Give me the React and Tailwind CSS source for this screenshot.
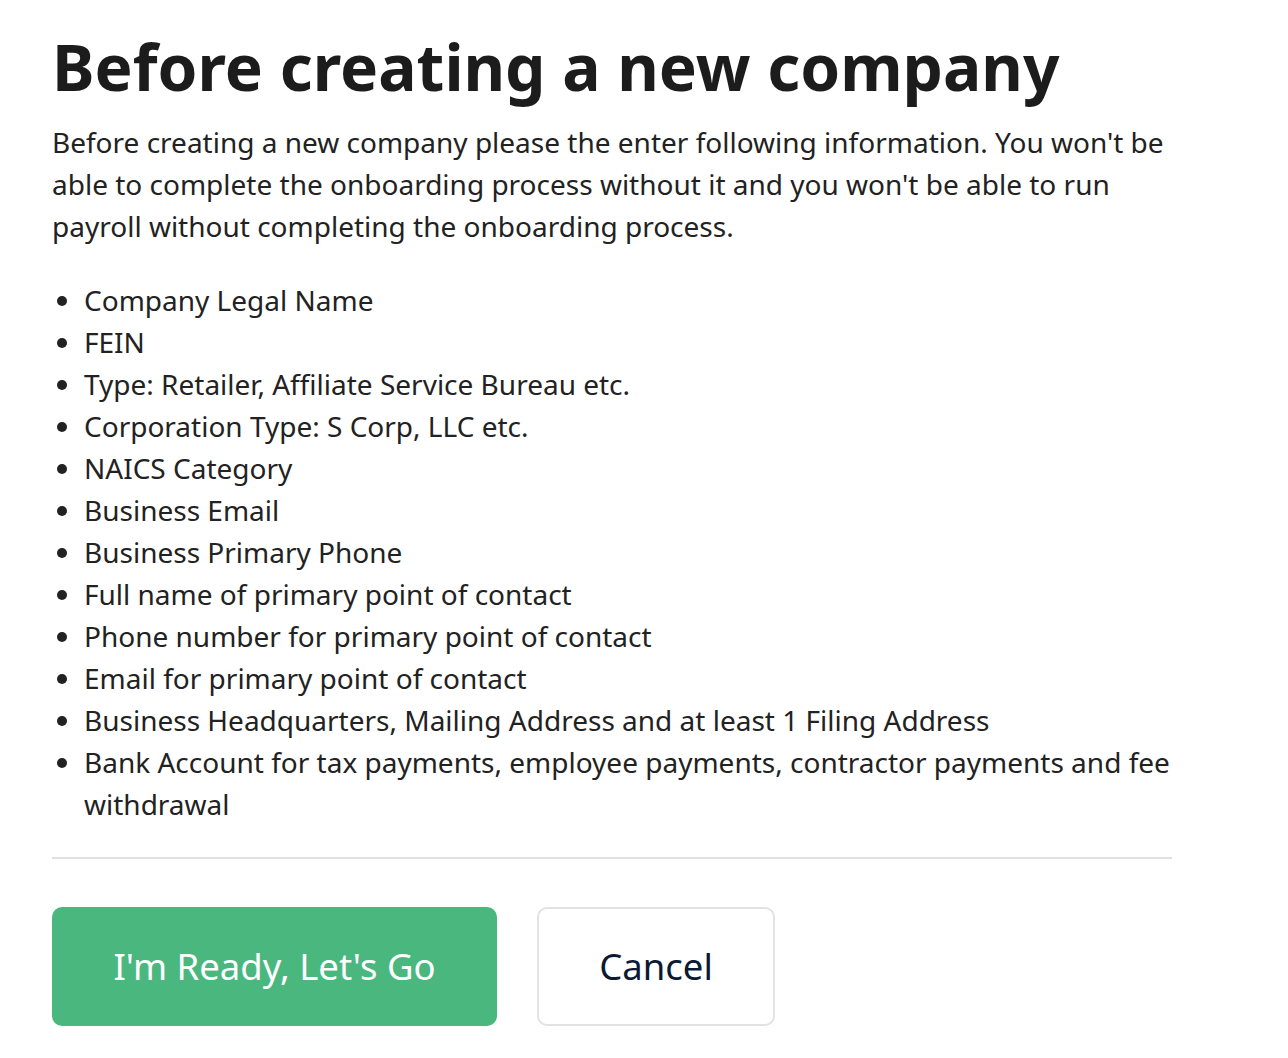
import React from "react";

const items = [
  "Company Legal Name",
  "FEIN",
  "Type: Retailer, Affiliate Service Bureau etc.",
  "Corporation Type: S Corp, LLC etc.",
  "NAICS Category",
  "Business Email",
  "Business Primary Phone",
  "Full name of primary point of contact",
  "Phone number for primary point of contact",
  "Email for primary point of contact",
  "Business Headquarters, Mailing Address and at least 1 Filing Address",
  "Bank Account for tax payments, employee payments, contractor payments and fee withdrawal",
];

function App() {
  return (
    <div className="min-h-screen bg-white font-['Noto_Sans',sans-serif] text-[#222]">
      <div className="w-[1120px] ml-[52px] pt-[27px]">
        <h1 className="text-[64px] leading-[80px] font-bold text-[#1c1c1c]">
          Before creating a new company
        </h1>
        <p className="mt-[14px] text-[28px] leading-[42px]">
          Before creating a new company please the enter following information. You won't be
          able to complete the onboarding process without it and you won't be able to run
          payroll without completing the onboarding process.
        </p>
        <ul className="mt-[32px] list-disc pl-[32px] text-[28px] leading-[42px]">
          {items.map((item) => (
            <li key={item}>{item}</li>
          ))}
        </ul>
        <hr className="mt-[32px] border-0 border-t-2 border-[#e0e0e0]" />
        <div className="mt-[48px] flex gap-[40px]">
          <button className="w-[445px] h-[119px] rounded-[10px] bg-[#4ab77f] text-white text-[36.5px]">
            I'm Ready, Let's Go
          </button>
          <button className="w-[238px] h-[119px] rounded-[10px] border-2 border-[#e2e2e2] bg-white text-[#0b1a33] text-[36.5px]">
            Cancel
          </button>
        </div>
      </div>
    </div>
  );
}

export default App;
